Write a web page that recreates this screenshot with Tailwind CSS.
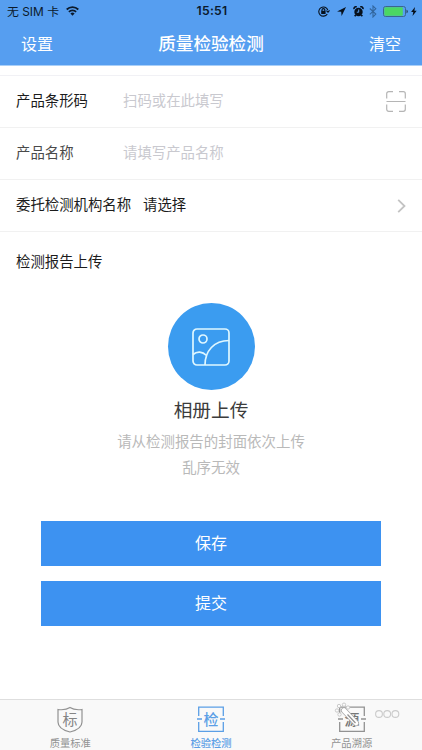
<!DOCTYPE html>
<html lang="zh-CN">
<head>
<meta charset="utf-8">
<meta name="viewport" content="width=device-width, initial-scale=1">
<title>质量检验检测</title>
<script src="https://cdn.jsdelivr.net/npm/@tailwindcss/browser@4"></script>
</head>
<body class="bg-white">
<div class="w-[422px] h-[750px] flex flex-col overflow-hidden bg-white font-['Liberation_Sans','Noto_Sans_CJK_SC',sans-serif] whitespace-nowrap">
  <header class="h-[66px] shrink-0 bg-[#569ef0] border-b border-[#a9cff8]">
    <div class="h-[22px] grid grid-cols-[1fr_auto_1fr] items-center pl-[7px] pr-[5px] text-[#0b1a2c] font-['Inter','Noto_Sans_CJK_SC',sans-serif]">
      <div class="flex items-center gap-[7px] text-[11.9px]">
        <span class="pt-[1px]">无 SIM 卡</span>
        <svg class="w-[13px] h-[10px]" viewBox="0 0 13 10" fill="none" stroke="currentColor" stroke-width="1.8"><path d="M.7 3.5a8.3 8.3 0 0 1 11.6 0M2.9 5.8a5.1 5.1 0 0 1 7.2 0"/><path d="M6.5 9.8 4.4 7.6a3 3 0 0 1 4.2 0z" fill="currentColor" stroke="none"/></svg>
      </div>
      <div class="text-[12.2px] font-semibold tracking-[0.3px]">15:51</div>
      <div class="flex items-center justify-end text-[#06101c]">
        <svg class="w-[12px] h-[11px] mr-[7px]" viewBox="0 0 12 11" fill="none" stroke="currentColor" stroke-width="1.1"><path d="M9.300 8A4.600 4.600 0 1 1 9.800 4.200M8.400 4.600l1.600 1.500 1.500-1.700"/><path d="M4 5V4a1.400 1.400 0 0 1 2.800 0v1"/><path d="M3.200 4.800h4.400V8H3.200z" fill="currentColor" stroke="none"/></svg>
        <svg class="w-[9px] h-[9px] mr-[7px]" viewBox="0 0 9 9" fill="currentColor"><path d="M9 0 0 4.500l4.200.3.400 4.200z"/></svg>
        <svg class="w-[11px] h-[11px] mr-[5px]" viewBox="0 0 10 11"><circle cx="5" cy="6" r="4.200" fill="currentColor"/><path d="M.5 3.100A2 2 0 0 1 3.200.9M9.500 3.100A2 2 0 0 0 6.800.9M2.200 9l-1 1.300M7.800 9l1 1.300" stroke="currentColor" stroke-width="1.600" fill="none"/><path d="M5.200 3.500v2.700H3.300" stroke="#569ef0" fill="none"/></svg>
        <svg class="w-[8px] h-[13px] mr-[6px]" viewBox="0 0 8 13" fill="none" stroke="#32669e" stroke-width="1.100"><path d="m.8 3.500 6 5.600L4 12V1l2.800 2.700-6 5.700"/></svg>
        <svg class="w-[25px] h-[11px] mr-[3px]" viewBox="0 0 25 11"><rect x=".5" y=".5" width="22" height="10" rx="2" fill="none" stroke="#3b668d"/><rect x="1.300" y="1.300" width="18.500" height="8.400" rx="1" fill="#4bd763"/><path d="M23.500 3.700c1.800.7 1.800 2.900 0 3.600z" fill="#24405e"/></svg>
        <svg class="w-[6px] h-[9px]" viewBox="0 0 6 9" fill="currentColor"><path d="M4 0 .1 5h2.200l-.8 4L5.700 3.700H3.400z"/></svg>
      </div>
    </div>
    <nav class="h-[43px] grid grid-cols-[1fr_auto_1fr] items-center px-[21px] pt-[2px] text-white text-[16px]">
      <a>设置</a>
      <h1 class="text-[17.6px] font-medium">质量检验检测</h1>
      <a class="justify-self-end">清空</a>
    </nav>
  </header>

  <main class="flex-1 flex flex-col text-[14.4px] text-[#1c1c1c]">
    <div class="h-[10px] shrink-0 border-b border-[#f1f1f5]"></div>
    <div class="h-[52px] shrink-0 flex items-center pl-[16px] pr-[16px] border-b border-[#f1f1f1]">
      <span class="w-[107px] pt-[1px]">产品条形码</span>
      <span class="flex-1 pt-[1px] text-[#c9c9cf]">扫码或在此填写</span>
      <svg class="w-[20px] h-[21px]" viewBox="0 0 20 21" fill="none" stroke="#b5b5b5" stroke-width="1.2"><path d="M.7 7.5V2.7a2 2 0 0 1 2-2H7M13 .7h4.3a2 2 0 0 1 2 2v4.8M19.3 13.5v4.8a2 2 0 0 1-2 2H13M7 20.3H2.7a2 2 0 0 1-2-2v-4.8M.5 10.5h19"/></svg>
    </div>
    <div class="h-[52px] shrink-0 flex items-center pl-[16px] pt-[1px] border-b border-[#f1f1f1]">
      <span class="w-[107px] text-[#4a4a4a]">产品名称</span>
      <span class="text-[#c9c9cf]">请填写产品名称</span>
    </div>
    <div class="h-[52px] shrink-0 flex items-center pl-[16px] pr-[16px] border-b border-[#f1f1f1]">
      <span class="w-[127px] pt-[1px]">委托检测机构名称</span>
      <span class="flex-1">请选择</span>
      <svg class="w-[9px] h-[14px]" viewBox="0 0 9 14" fill="none" stroke="#c3c3c3" stroke-width="1.8"><path d="m1.2.8 6.3 6.2-6.3 6.2"/></svg>
    </div>
    <h2 class="pl-[16px] mt-[19px] leading-[22px]">检测报告上传</h2>

    <section class="mt-[30px] flex flex-col items-center">
      <div class="w-[87px] h-[87px] rounded-full bg-[#3b9cf0] flex items-center justify-center">
        <svg class="w-[38px] h-[38px]" viewBox="0 0 38 38" fill="none" stroke="#dff7ff" stroke-width="1.7"><rect x="1" y="1" width="36" height="36" rx="4"/><circle cx="11" cy="11" r="4"/><path d="M13 37C13 23 22 12.500 37 12.500M1 26.500c4-3.500 9.500-3.200 13.500 1"/></svg>
      </div>
      <p class="mt-[7px] text-[18.7px] leading-[28px] text-[#3c3c3c]">相册上传</p>
      <p class="mt-[4px] text-[14.45px] leading-[26px] text-[#b9b9b9] text-center">请从检测报告的封面依次上传<br>乱序无效</p>
    </section>

    <div class="mt-[40px] px-[41px] flex flex-col gap-[15px] text-[16px] text-white">
      <button class="h-[45px] pt-[1px] bg-[#3d92f1]">保存</button>
      <button class="h-[45px] pt-[1px] bg-[#3d92f1]">提交</button>
    </div>
  </main>

  <footer class="relative h-[51px] shrink-0 grid grid-cols-3 bg-[#f9f9f9] border-t border-[#dedede] text-[10.300px] text-[#929292]">
    <div class="flex flex-col items-center pt-[6px]">
      <svg class="w-[28px] h-[27px]" viewBox="0 0 28 27"><path d="M14 1.500C11 3.500 6 4 2 3.500V16c0 5 6 8.500 12 10 6-1.500 12-5 12-10V3.500C22 4 17 3.500 14 1.500z" fill="none" stroke="#929292" stroke-width="1.200"/><text x="14" y="19" font-size="15" text-anchor="middle" fill="#858585">标</text></svg>
      <span class="leading-[15px] mt-[3px]">质量标准</span>
    </div>
    <div class="flex flex-col items-center pt-[6px] text-[#5b9fe6]">
      <svg class="w-[28px] h-[27px]" viewBox="0 0 28 27"><path d="M1.700 10V1.200h24.600V10M1.700 16v9.300h24.600V16M0 13h5M23 13h5" fill="none" stroke="currentColor" stroke-width="1.300"/><text x="14" y="19" font-size="15" font-weight="500" text-anchor="middle" fill="currentColor">检</text></svg>
      <span class="leading-[15px] mt-[3px] font-medium">检验检测</span>
    </div>
    <div class="flex flex-col items-center pt-[6px]">
      <svg class="w-[28px] h-[27px]" viewBox="0 0 28 27"><path d="M1.700 10V1.200h24.600V10M1.700 16v9.300h24.600V16M0 13h5M23 13h5" fill="none" stroke="#929292" stroke-width="1.300"/><text x="14" y="19" font-size="15" font-weight="500" text-anchor="middle" fill="#777">源</text></svg>
      <span class="leading-[15px] mt-[3px]">产品溯源</span>
    </div>
    <svg class="absolute left-[333px] top-[2px] w-[68px] h-[28px]" viewBox="0 0 68 28">
      <g fill="#fafafa" stroke="#c4c4c4" stroke-width=".9"><circle cx="6" cy="4" r="1.700"/><circle cx="11" cy="2.700" r="1.700"/><circle cx="15" cy="5.500" r="1.700"/><circle cx="4" cy="8.500" r="1.700"/><circle cx="6.500" cy="12.500" r="1.700"/></g>
      <path d="m11 8.500 12 12.500" stroke="#a7a7a7" stroke-width="6" stroke-linecap="round"/><path d="m11 8.500 12 12.500" stroke="#fff" stroke-width="4.600" stroke-linecap="round"/><path d="m14.500 12.500 8 8.500" stroke="#929292" stroke-width="1.200"/>
      <g fill="none" stroke="#cbcbcb" stroke-width="1.100"><circle cx="46" cy="12" r="3.400"/><circle cx="54.200" cy="12" r="3.400"/><circle cx="62.400" cy="12" r="3.400"/></g>
    </svg>
  </footer>
</div>
</body>
</html>
